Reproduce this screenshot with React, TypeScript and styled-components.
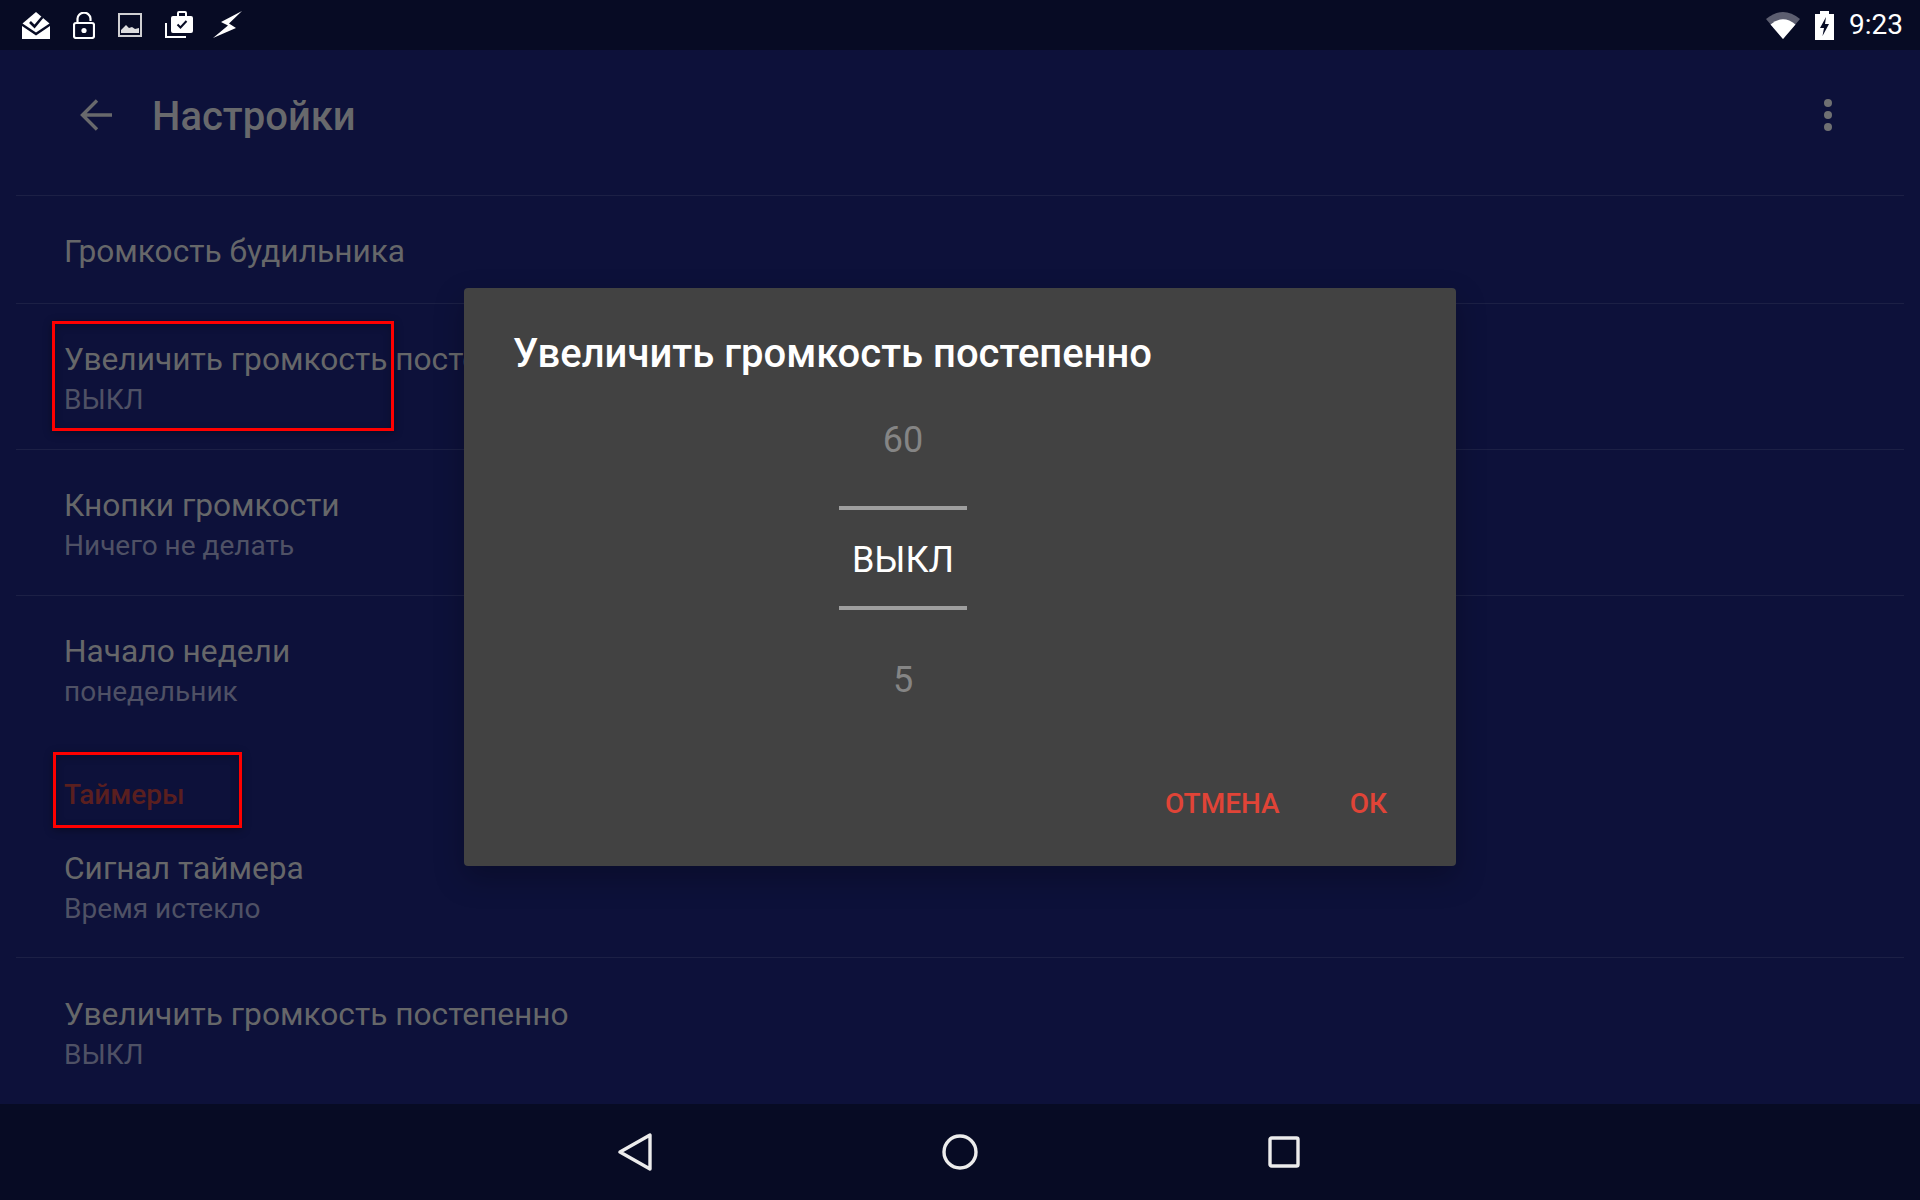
import React from "react";
import styled, { createGlobalStyle } from "styled-components";

const GlobalStyle = createGlobalStyle`
  html, body {
    margin: 0;
    padding: 0;
    background: #0d113a;
    font-family: Roboto, "Noto Sans", sans-serif;
  }
`;

const Screen = styled.div`
  display: flex;
  flex-direction: column;
  width: 1920px;
  height: 1200px;
  overflow: hidden;
  background: #0d113a;
`;

const StatusBar = styled.div`
  flex: none;
  display: flex;
  align-items: center;
  justify-content: space-between;
  height: 50px;
  padding: 0 17px 0 22px;
  background: #070b24;
`;

const StatusGroup = styled.div`
  display: flex;
  align-items: center;
  gap: ${({ $gap }: { $gap: number }) => $gap}px;
`;

const Clock = styled.span`
  font-size: 28px;
  line-height: 50px;
  color: #fff;
`;

const Main = styled.div`
  position: relative;
  flex: 1;
  display: flex;
  flex-direction: column;
`;

const ActionBar = styled.div`
  flex: none;
  box-sizing: border-box;
  display: flex;
  align-items: center;
  height: 145px;
  padding: 0 88px 15px 80px;
`;

const ActionTitle = styled.h1`
  flex: 1;
  margin: 2px 0 0 40px;
  font-size: 40px;
  font-weight: 500;
  color: #68696c;
`;

const MoreButton = styled.div`
  display: flex;
  flex-direction: column;
  gap: 4px;
`;

const MoreDot = styled.span`
  width: 8px;
  height: 8px;
  border-radius: 50%;
  background: #6f7072;
`;

const Row = styled.div<{ $single?: boolean; $plain?: boolean; $pad?: number }>`
  position: relative;
  flex: none;
  box-sizing: border-box;
  display: flex;
  flex-direction: column;
  justify-content: ${({ $single }) => ($single ? "center" : "flex-start")};
  height: ${({ $single }) => ($single ? 108 : 146)}px;
  margin: 0 16px;
  padding: ${({ $single, $pad = 35 }) => ($single ? "4px 0 0 48px" : `${$pad}px 0 0 48px`)};
  border-top: ${({ $plain }) => ($plain ? "none" : "1px solid #1c2045")};
`;

const RowTitle = styled.div`
  font-size: 31.7px;
  line-height: 42px;
  color: #666769;
  white-space: nowrap;
`;

const RowSub = styled.div`
  margin-top: -1px;
  font-size: 28px;
  line-height: 40px;
  color: #4f5165;
  white-space: nowrap;
`;

const Section = styled.div`
  position: relative;
  flex: none;
  box-sizing: border-box;
  height: 70px;
  margin: 0 16px;
  padding: 34px 0 0 48px;
  font-size: 28px;
  line-height: 40px;
  font-weight: 500;
  color: #5a1f1f;
`;

const Highlight = styled.div<{ $left: number; $top: number; $width: number; $height: number }>`
  position: absolute;
  box-sizing: border-box;
  left: ${({ $left }) => $left}px;
  top: ${({ $top }) => $top}px;
  width: ${({ $width }) => $width}px;
  height: ${({ $height }) => $height}px;
  border: 3px solid #f00;
  box-shadow: 0 2px 8px rgba(0, 0, 0, 0.35), inset 0 2px 8px rgba(0, 0, 0, 0.2);
`;

const Overlay = styled.div`
  position: absolute;
  inset: 0;
  display: flex;
  align-items: center;
  justify-content: center;
`;

const Dialog = styled.div`
  box-sizing: border-box;
  display: flex;
  flex-direction: column;
  width: 992px;
  height: 578px;
  padding: 41px 69px 0 49px;
  background: #424242;
  border-radius: 4px;
  box-shadow: 0 12px 30px rgba(0, 0, 0, 0.25);
`;

const DialogTitle = styled.h2`
  margin: 0;
  font-size: 40px;
  line-height: 50px;
  font-weight: 500;
  color: #fff;
  white-space: nowrap;
`;

const Picker = styled.div`
  display: flex;
  flex-direction: column;
  align-items: center;
  width: 128px;
  margin: 13px 0 0 326px;
`;

const PickerValue = styled.div`
  height: 96px;
  line-height: 96px;
  font-size: 36px;
  color: #858585;
`;

const PickerCurrent = styled.div`
  box-sizing: border-box;
  width: 128px;
  height: 104px;
  margin: 18px 0 22px;
  border-top: 4px solid #9e9e9e;
  border-bottom: 4px solid #9e9e9e;
  text-align: center;
  font-size: 36px;
  line-height: 100px;
  color: #fff;
`;

const DialogActions = styled.div`
  display: flex;
  justify-content: flex-end;
  gap: 70px;
  margin-top: 56px;
`;

const ActionButton = styled.span`
  font-size: 28px;
  line-height: 40px;
  font-weight: 500;
  color: #e04437;
`;

const NavBar = styled.div`
  flex: none;
  box-sizing: border-box;
  display: flex;
  align-items: center;
  justify-content: center;
  gap: 290px;
  height: 96px;
  padding-right: 2px;
  background: #070b24;
`;

const Svg = styled.svg`
  display: block;
  flex: none;
`;

const BoltSvg = styled(Svg)`
  margin-left: -3px;
  filter: blur(0.7px);
`;

const MailIcon = () => (
  <Svg width="28" height="27" viewBox="0 0 28 27">
    <path d="M0 14 L14 23.5 L28 14 V27 H0Z" fill="#fff" />
    <path d="M0.5 11.5 L14 0 L27.5 11.5 L14 20.5Z" fill="#fff" />
    <path d="M8 10 L12.5 14.5 L20.5 5" fill="none" stroke="#070b24" strokeWidth="2.6" />
  </Svg>
);

const LockIcon = () => (
  <Svg width="22" height="27" viewBox="0 0 22 27">
    <rect x="1" y="11" width="20" height="15" rx="2" fill="none" stroke="#fff" strokeWidth="2.2" />
    <path d="M4.5 11 V7 A6.5 6 0 0 1 17.5 6.5 V9" fill="none" stroke="#fff" strokeWidth="2.2" />
    <circle cx="11" cy="18.5" r="2.6" fill="#fff" />
  </Svg>
);

const ImageIcon = () => (
  <Svg width="24" height="24" viewBox="0 0 24 24">
    <rect x="1" y="1" width="22" height="22" fill="none" stroke="#cfcfd2" strokeWidth="2" />
    <path d="M3 20 V17 L8 12 L11 15 L14 14 L17 16 L21 15 V20Z" fill="#dcdcde" />
  </Svg>
);

const BriefcaseIcon = () => (
  <Svg width="28" height="28" viewBox="0 0 28 28">
    <path d="M1 12 V26 H3 H21" fill="none" stroke="#fff" strokeWidth="2" />
    <path
      d="M12 5 V2 Q12 0 14 0 H20 Q22 0 22 2 V5 H26 Q28 5 28 7 V20 Q28 22 26 22 H8 Q6 22 6 20 V7 Q6 5 8 5Z M14 2 V5 H20 V2Z"
      fill="#fff"
      fillRule="evenodd"
    />
    <path d="M12.5 13.5 L15.5 16.5 L21.5 10" fill="none" stroke="#070b24" strokeWidth="2" />
  </Svg>
);

const BoltIcon = () => (
  <BoltSvg width="30" height="28" viewBox="0 0 30 28">
    <path d="M29 0 L8 11 L15 14.5 L0 27 L23 17 L16 12.5Z" fill="#fff" />
  </BoltSvg>
);

const WifiIcon = () => (
  <Svg width="34" height="28" viewBox="0 0 34 28">
    <path d="M0 8 Q17 -6 34 8 L17 28Z" fill="#5c5e70" />
    <path d="M4.5 13.5 Q17 3 29.5 13.5 L17 28Z" fill="#fff" />
  </Svg>
);

const BatteryIcon = () => (
  <Svg width="19" height="29" viewBox="0 0 19 29">
    <path d="M5 3 V0 H14 V3 H19 V29 H0 V3Z" fill="#fff" />
    <path d="M11 6 L5 17 H9 L7.5 25 L14 13 H10Z" fill="#070b24" />
  </Svg>
);

const BackArrow = () => (
  <Svg width="32" height="32" viewBox="0 0 32 32">
    <path d="M32 16 H3 M17 1.5 L2.5 16 L17 30.5" fill="none" stroke="#68696c" strokeWidth="3.4" />
  </Svg>
);

const NavBack = () => (
  <Svg width="34" height="38" viewBox="0 0 34 38">
    <path d="M32 2 V36 L2 19Z" fill="none" stroke="#ececec" strokeWidth="3.4" strokeLinejoin="round" />
  </Svg>
);

const NavHome = () => (
  <Svg width="36" height="36" viewBox="0 0 36 36">
    <circle cx="18" cy="18" r="16" fill="none" stroke="#ececec" strokeWidth="3.4" />
  </Svg>
);

const NavRecent = () => (
  <Svg width="32" height="32" viewBox="0 0 32 32">
    <rect x="2" y="2" width="28" height="28" rx="1.5" fill="none" stroke="#ececec" strokeWidth="3.4" />
  </Svg>
);

const App: React.FC = () => (
  <Screen>
    <GlobalStyle />
    <StatusBar>
      <StatusGroup $gap={23}>
        <MailIcon />
        <LockIcon />
        <ImageIcon />
        <BriefcaseIcon />
        <BoltIcon />
      </StatusGroup>
      <StatusGroup $gap={15}>
        <WifiIcon />
        <BatteryIcon />
        <Clock>9:23</Clock>
      </StatusGroup>
    </StatusBar>
    <Main>
      <ActionBar>
        <BackArrow />
        <ActionTitle>Настройки</ActionTitle>
        <MoreButton>
          <MoreDot />
          <MoreDot />
          <MoreDot />
        </MoreButton>
      </ActionBar>
      <Row $single>
        <RowTitle>Громкость будильника</RowTitle>
      </Row>
      <Row>
        <RowTitle>Увеличить громкость постепенно</RowTitle>
        <RowSub>ВЫКЛ</RowSub>
        <Highlight $left={36} $top={17} $width={342} $height={110} />
      </Row>
      <Row>
        <RowTitle>Кнопки громкости</RowTitle>
        <RowSub>Ничего не делать</RowSub>
      </Row>
      <Row>
        <RowTitle>Начало недели</RowTitle>
        <RowSub>понедельник</RowSub>
      </Row>
      <Section>
        Таймеры
        <Highlight $left={37} $top={11} $width={189} $height={76} />
      </Section>
      <Row $plain $pad={37}>
        <RowTitle>Сигнал таймера</RowTitle>
        <RowSub>Время истекло</RowSub>
      </Row>
      <Row $pad={36}>
        <RowTitle>Увеличить громкость постепенно</RowTitle>
        <RowSub>ВЫКЛ</RowSub>
      </Row>
      <Overlay>
        <Dialog>
          <DialogTitle>Увеличить громкость постепенно</DialogTitle>
          <Picker>
            <PickerValue>60</PickerValue>
            <PickerCurrent>ВЫКЛ</PickerCurrent>
            <PickerValue>5</PickerValue>
          </Picker>
          <DialogActions>
            <ActionButton>ОТМЕНА</ActionButton>
            <ActionButton>ОК</ActionButton>
          </DialogActions>
        </Dialog>
      </Overlay>
    </Main>
    <NavBar>
      <NavBack />
      <NavHome />
      <NavRecent />
    </NavBar>
  </Screen>
);

export default App;
